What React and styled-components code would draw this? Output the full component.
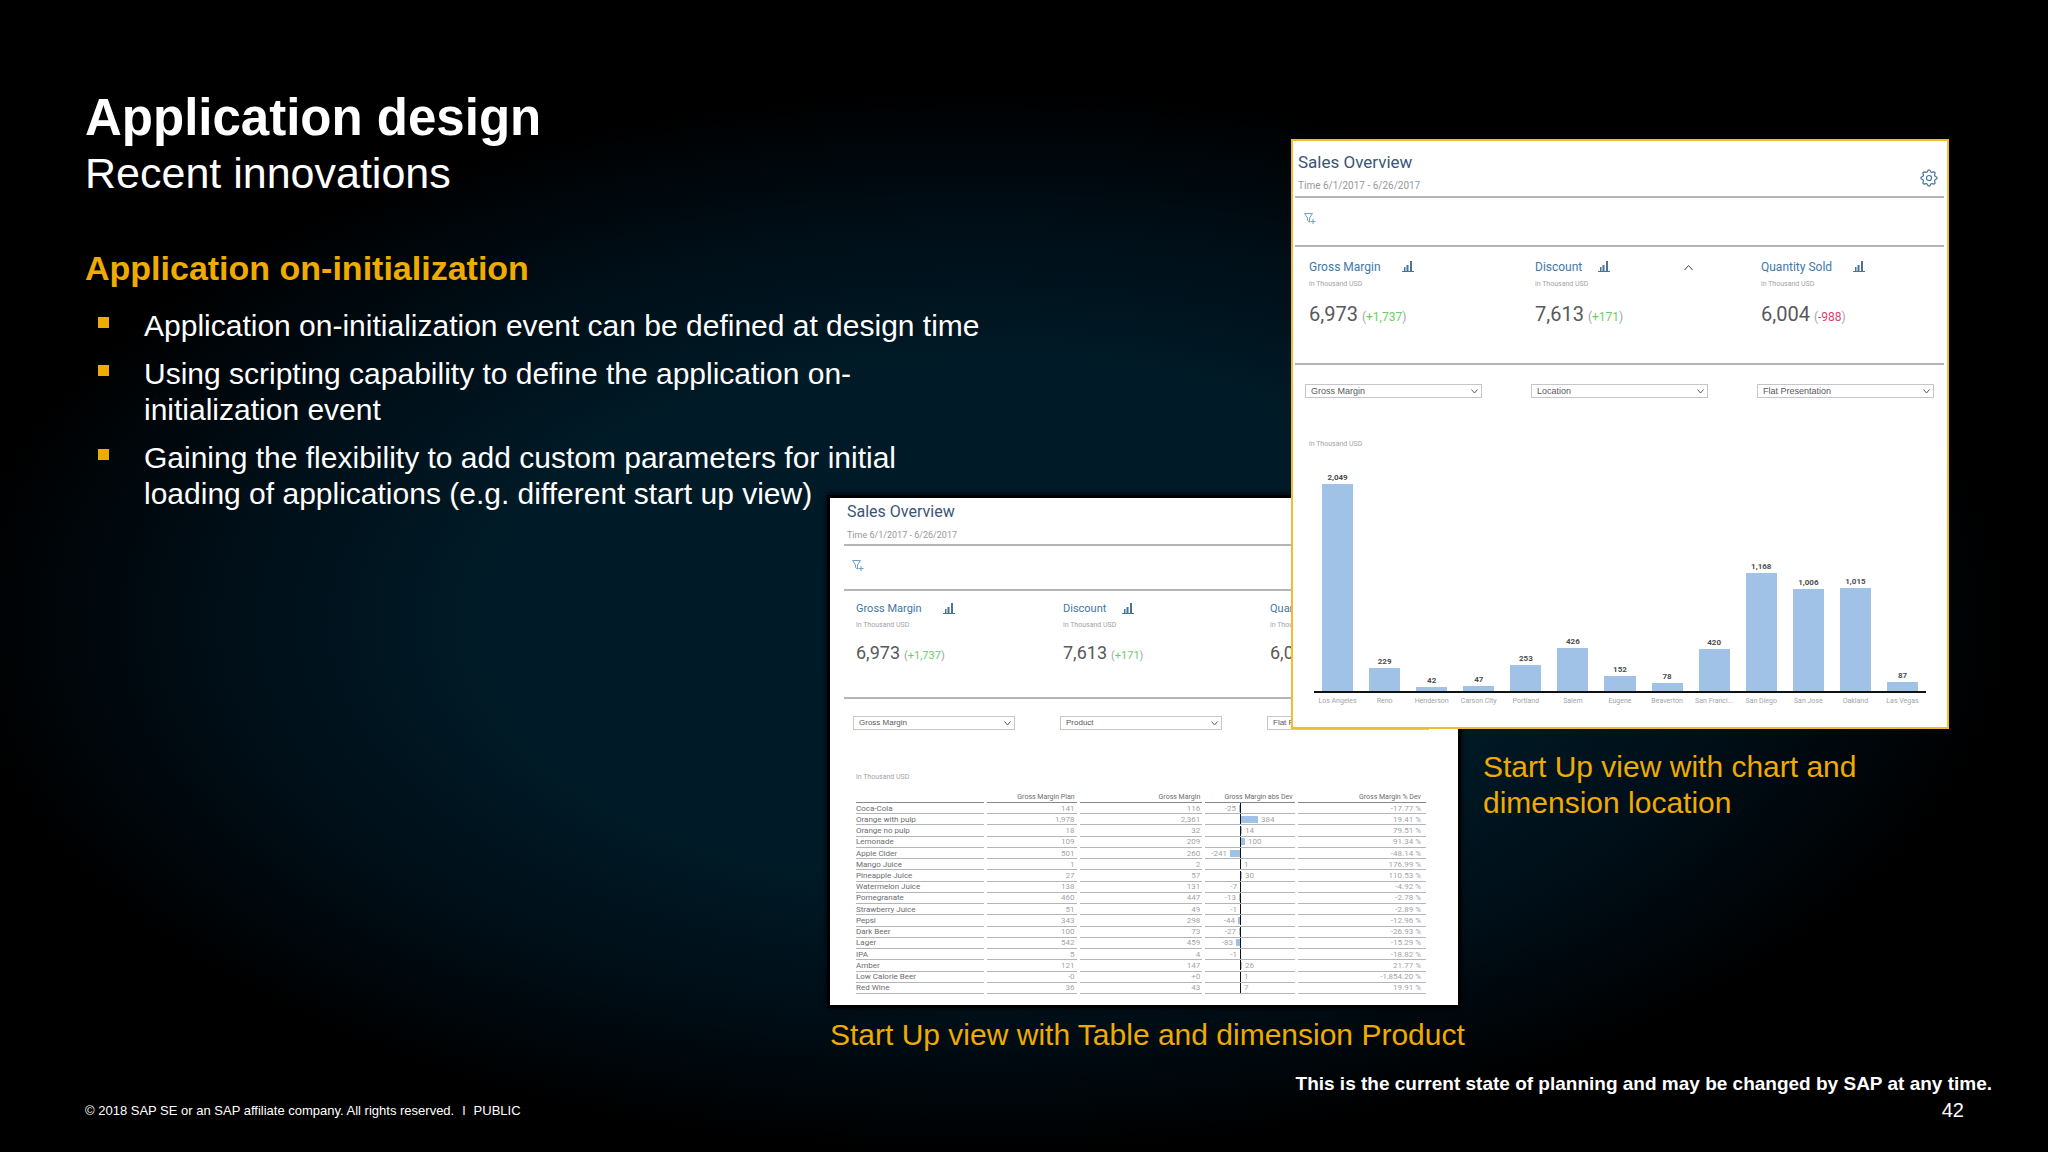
import React from 'react'
import styled, { createGlobalStyle } from 'styled-components'

const GlobalStyle = createGlobalStyle`
  * {
    box-sizing: border-box;
  }

  body {
    background: #000;
    margin: 0;
  }
`

const Slide = styled.main`
  background:
    radial-gradient(ellipse 50% 46% at 48% 54%, #001b2a 0%, #001a26 50%, #000e17 75%, rgba(0, 0, 0, 0) 100%),
    #000;
  color: #fff;
  display: grid;
  font-family: 'Liberation Sans', Arial, sans-serif;
  grid-template-columns: 742fr 464fr 170fr 488fr 99fr;
  grid-template-rows: 411px 234px auto 1fr;
  min-height: 100vh;
  padding: 84px 0 0 85px;
`

const Copy = styled.section`
  grid-column: 1 / 3;
  grid-row: 1 / 3;
  max-width: 896px;
`

const Title = styled.h1`
  font-size: 51px;
  line-height: 68px;
  margin: 0;
`

const Subtitle = styled.p`
  font-size: 43px;
  line-height: 42px;
  margin: 0;
`

const Topic = styled.h2`
  color: #f0ab00;
  font-size: 34px;
  line-height: 40px;
  margin: 54px 0 20px;
`

const Bullets = styled.ul`
  display: flex;
  flex-direction: column;
  font-size: 30px;
  gap: 12px;
  line-height: 36px;
  list-style: none;
  margin: 0;
  padding: 0;
`

const Bullet = styled.li`
  display: flex;
  gap: 35px;
  padding-left: 13px;

  &::before {
    background: #f0ab00;
    content: '';
    flex: none;
    height: 11px;
    margin-top: 9px;
    width: 11px;
  }
`

const Caption = styled.p`
  color: #f0ab00;
  font-size: 30px;
  line-height: 36px;
  margin: 0;
`

const ChartCaption = styled(Caption)`
  grid-column: 4;
  grid-row: 3;
  padding: 20px 60px 0 22px;
`

const TableCaption = styled(Caption)`
  grid-column: 2 / 5;
  grid-row: 4;
  padding: 9px 0 0 3px;
`

const Footer = styled.footer`
  align-items: flex-end;
  display: flex;
  grid-column: 1 / 6;
  grid-row: 4;
  justify-content: space-between;
  padding: 0 56px 29px 0;
`

const Legal = styled.small`
  display: flex;
  font-size: 13px;
  gap: 8px;
  line-height: 20px;
  padding-bottom: 2px;
`

const Disclaimer = styled.div`
  font-size: 19px;
  font-weight: 700;
  line-height: 26px;
`

const PageNumber = styled.div`
  font-size: 20px;
  font-weight: 400;
  padding-right: 28px;
  text-align: right;
`

const Panel = styled.article`
  background: #fff;
  color: #58595b;
  font-family: Roboto, sans-serif;
`

const ChartPanel = styled(Panel)`
  border: 2px solid #f2bc30;
  grid-column: 3 / 5;
  grid-row: 1 / 3;
  margin-top: 55px;
  padding: 0 3px 0 2px;
  z-index: 1;
`

const TablePanel = styled(Panel)`
  align-self: start;
  border: 3px solid #000;
  box-shadow: 0 0 5px #000;
  grid-column: 2 / 4;
  grid-row: 2 / 4;
  padding: 0 19px 11px 14px;
`

const PanelHeader = styled.header`
  align-items: flex-end;
  border-bottom: 2px solid #b4b5b8;
  display: flex;
  height: ${({ $small }) => ($small ? 48 : 57)}px;
  justify-content: space-between;
  padding: 0 6px 0 3px;
`

const PanelTitle = styled.h3`
  color: #3a5575;
  font-size: ${({ $small }) => ($small ? 16 : 17)}px;
  font-weight: 400;
  line-height: 28px;
  margin: 0;
`

const Period = styled.p`
  color: #97999b;
  font-size: ${({ $small }) => ($small ? 9 : 10)}px;
  line-height: ${({ $small }) => ($small ? 18 : 20)}px;
  margin: 0;
`

const IconButton = styled.button`
  background: none;
  border: 0;
  color: ${({ $color }) => $color || '#4a7396'};
  display: flex;
  padding: 0;
`

const Settings = styled(IconButton)`
  margin-bottom: 9px;
`

const FilterBar = styled.div`
  border-bottom: 2px solid #b4b5b8;
  height: ${({ $small }) => ($small ? 45 : 49)}px;
  padding: ${({ $small }) => ($small ? '14px 8px' : '15px 9px')};
`

const Columns = styled.div`
  display: grid;
  grid-template-columns: ${({ $small }) => ($small ? '207fr 207fr 181fr' : '226fr 226fr 197fr')};
`

const Kpis = styled(Columns)`
  border-bottom: 2px solid #b4b5b8;
  height: ${({ $small }) => ($small ? 108 : 118)}px;
  padding-top: ${({ $small }) => ($small ? 8 : 9)}px;
`

const Kpi = styled.div`
  padding-left: ${({ $small }) => ($small ? 12 : 14)}px;
`

const KpiHead = styled.div`
  align-items: center;
  color: #3f78a8;
  display: flex;
  font-size: ${({ $small }) => ($small ? 11 : 12)}px;
  gap: ${({ $wide }) => ($wide ? 21 : 16)}px;
  line-height: ${({ $small }) => ($small ? 20 : 22)}px;
`

const ChartLink = styled(IconButton)`
  padding-bottom: 3px;
`

const Toggle = styled(IconButton)`
  margin: 0 54px 0 auto;
`

const Unit = styled.p`
  color: #a2a4a6;
  font-size: 7px;
  line-height: 12px;
  margin: 0;
`

const Value = styled.p`
  font-size: ${({ $small }) => ($small ? 18 : 20)}px;
  line-height: 24px;
  margin: ${({ $small }) => ($small ? 10 : 12)}px 0 0;
`

const Delta = styled.span`
  color: #a2a4a6;
  font-size: ${({ $small }) => ($small ? 11 : 12)}px;
  margin-left: 4px;

  b {
    color: ${({ $down }) => ($down ? '#e3406f' : '#68cf63')};
    font-weight: 400;
  }
`

const Filters = styled(Columns)`
  padding-top: ${({ $small }) => ($small ? 17 : 19)}px;
`

const SelectBox = styled.label`
  display: block;
  margin: 0 ${({ $small }) => ($small ? 36 : 39)}px 0 ${({ $small }) => ($small ? 9 : 10)}px;
  position: relative;

  svg {
    pointer-events: none;
    position: absolute;
    right: 3px;
    top: 4px;
  }
`

const LastSelectBox = styled(SelectBox)`
  margin-right: 10px;
`

const Select = styled.select`
  appearance: none;
  background: #fff;
  border: 1px solid #c5c6cb;
  border-radius: 0;
  color: #58595b;
  display: block;
  font-family: 'Liberation Sans', Arial, sans-serif;
  font-size: ${({ $small }) => ($small ? 8 : 9)}px;
  height: 14px;
  line-height: 12px;
  padding: 0 5px;
  width: 100%;
`

const Chart = styled.div`
  padding: 40px 18px 23px 14px;
`

const Bars = styled.div`
  align-items: flex-end;
  border-bottom: 2px solid #111;
  display: flex;
  height: 243px;
  margin-left: 5px;
`

const BarSlot = styled.div`
  align-items: center;
  color: #4c4d4f;
  display: flex;
  flex: 1;
  flex-direction: column;
  font-size: 8px;
  font-weight: 700;
  line-height: 12px;
`

const Bar = styled.div`
  background: #9fc2e6;
  width: 66%;
`

const Cities = styled.div`
  color: #a2a4a6;
  display: flex;
  font-size: 7px;
  line-height: 12px;
  margin: 2px 0 0 5px;

  span {
    flex: 1;
    text-align: center;
    white-space: nowrap;
  }
`

const TableArea = styled.div`
  padding: 41px 10px 0 12px;
`

const Table = styled.table`
  border-collapse: separate;
  border-spacing: 3px 0;
  color: #a2a4a6;
  font-size: 8px;
  height: 201px;
  line-height: 9px;
  margin: 10px 0 0 -3px;
  table-layout: fixed;
  width: calc(100% + 3px);

  th {
    border-bottom: 1px solid #b4b5b8;
    color: #6b6d70;
    font-weight: 400;
    padding: 0 2px;
    text-align: right;
    white-space: nowrap;
  }

  thead th {
    border-color: #85878a;
    font-size: 7px;
  }

  tbody th {
    padding: 0;
    text-align: left;
  }

  td {
    border-bottom: 1px solid #b4b5b8;
    padding: 0 2px;
    text-align: right;
  }

  th:last-child,
  td:last-child {
    padding-right: 5px;
  }
`

const DevCell = styled.td`
  && {
    padding: 0;
  }
`

const Deviation = styled.div`
  display: grid;
  grid-template-columns: 2fr 3fr;
  height: 10px;
`

const Side = styled.div`
  align-items: center;
  display: flex;
  gap: 3px;
  justify-content: ${({ $left }) => ($left ? 'flex-end' : 'flex-start')};
  ${({ $left }) => $left && 'border-right: 1px solid #111;'}
`

const DevBar = styled.div`
  background: #9fc2e6;
  height: 7px;
`

const FilterIcon = () => (
  <svg width="12" height="12" viewBox="0 0 12 12" fill="none" stroke="currentColor">
    <path d="M.5.5h8L5.500 5v4L3.500 7.500V5zM9 6v5M6.500 8.500h5" />
  </svg>
)

const ChartIcon = () => (
  <svg width="12" height="12" viewBox="0 0 12 12" fill="currentColor">
    <path d="M0 11h12v1H0zM2 7h1.500v4H2zM4.500 5h2v6h-2zM8 1h2v10H8z" />
  </svg>
)

// eight rounded teeth around the hub
const gearPoints = Array.from({ length: 32 }, (_, i) => {
  const angle = ((i - 0.5) * Math.PI) / 16
  const radius = i % 4 < 2 ? 8 : 6.3
  return `${(9 + radius * Math.cos(angle)).toFixed(2)},${(9 + radius * Math.sin(angle)).toFixed(2)}`
}).join(' ')

const GearIcon = () => (
  <svg width="18" height="18" viewBox="0 0 18 18" fill="none" stroke="currentColor" strokeWidth="1.2" strokeLinejoin="round">
    <polygon points={gearPoints} />
    <circle cx="9" cy="9" r="2.500" />
  </svg>
)

const Chevron = ({ up }) => (
  <svg width="9" height="7" viewBox="0 0 9 7" fill="none" stroke="currentColor">
    <path d={up ? 'M.5 6l4-4.500 4 4.500' : 'M1.500 1.500l3 3.500 3-3.500'} />
  </svg>
)

const kpis = [
  { name: 'Gross Margin', value: '6,973', delta: '+1,737' },
  { name: 'Discount', value: '7,613', delta: '+171' },
  { name: 'Quantity Sold', value: '6,004', delta: '-988', down: true },
]

const cities = [
  ['Los Angeles', 2049],
  ['Reno', 229],
  ['Henderson', 42],
  ['Carson City', 47],
  ['Portland', 253],
  ['Salem', 426],
  ['Eugene', 152],
  ['Beaverton', 78],
  ['San Franci...', 420],
  ['San Diego', 1168],
  ['San Jose', 1006],
  ['Oakland', 1015],
  ['Las Vegas', 87],
]

const products = [
  ['Coca-Cola', '141', '116', -25, '-17.77 %'],
  ['Orange with pulp', '1,978', '2,361', 384, '19.41 %'],
  ['Orange no pulp', '18', '32', 14, '79.51 %'],
  ['Lemonade', '109', '209', 100, '91.34 %'],
  ['Apple Cider', '501', '260', -241, '-48.14 %'],
  ['Mango Juice', '1', '2', 1, '176.99 %'],
  ['Pineapple Juice', '27', '57', 30, '110.53 %'],
  ['Watermelon Juice', '138', '131', -7, '-4.92 %'],
  ['Pomegranate', '460', '447', -13, '-2.78 %'],
  ['Strawberry Juice', '51', '49', -1, '-2.89 %'],
  ['Pepsi', '343', '298', -44, '-12.96 %'],
  ['Dark Beer', '100', '73', -27, '-26.93 %'],
  ['Lager', '542', '459', -83, '-15.29 %'],
  ['IPA', '5', '4', -1, '-18.82 %'],
  ['Amber', '121', '147', 26, '21.77 %'],
  ['Low Calorie Beer', '-0', '+0', 1, '-1,854.20 %'],
  ['Red Wine', '36', '43', 7, '19.91 %'],
]

const Dropdown = ({ label, value, small, last }) => {
  const Box = last ? LastSelectBox : SelectBox
  return (
    <Box $small={small}>
      <Select $small={small} aria-label={label} defaultValue={value}>
        <option>{value}</option>
      </Select>
      <Chevron />
    </Box>
  )
}

const Overview = ({ small, dimension }) => (
  <>
    <PanelHeader $small={small}>
      <div>
        <PanelTitle $small={small}>Sales Overview</PanelTitle>
        <Period $small={small}>Time 6/1/2017 - 6/26/2017</Period>
      </div>
      {!small && (
        <Settings aria-label="Settings"><GearIcon /></Settings>
      )}
    </PanelHeader>
    <FilterBar $small={small}>
      <IconButton aria-label="Add filter" $color="#6fa0c8"><FilterIcon /></IconButton>
    </FilterBar>
    <Kpis $small={small}>
      {kpis.map((kpi, i) => (
        <Kpi key={kpi.name} $small={small}>
          <KpiHead $small={small} $wide={i !== 1}>
            {kpi.name}
            <ChartLink aria-label={`${kpi.name} chart`}><ChartIcon /></ChartLink>
            {i === 1 && !small && (
              <Toggle aria-label="Collapse" $color="#33475b"><Chevron up /></Toggle>
            )}
          </KpiHead>
          <Unit>in Thousand USD</Unit>
          <Value $small={small}>
            {kpi.value}
            <Delta $small={small} $down={kpi.down}>(<b>{kpi.delta}</b>)</Delta>
          </Value>
        </Kpi>
      ))}
    </Kpis>
    <Filters $small={small}>
      <Dropdown label="Measure" value="Gross Margin" small={small} />
      <Dropdown label="Dimension" value={dimension} small={small} />
      <Dropdown label="Presentation" value="Flat Presentation" small={small} last />
    </Filters>
  </>
)

const LocationView = () => (
  <ChartPanel>
    <Overview dimension="Location" />
    <Chart>
      <Unit>in Thousand USD</Unit>
      <Bars>
        {cities.map(([city, amount]) => (
          <BarSlot key={city}>
            {amount.toLocaleString('en-US')}
            <Bar style={{ height: Math.round(amount * 0.101) }} />
          </BarSlot>
        ))}
      </Bars>
      <Cities>
        {cities.map(([city]) => <span key={city}>{city}</span>)}
      </Cities>
    </Chart>
  </ChartPanel>
)

const ProductView = () => (
  <TablePanel>
    <Overview small dimension="Product" />
    <TableArea>
      <Unit>in Thousand USD</Unit>
      <Table>
        <colgroup>
          <col width="23%" />
          <col width="16%" />
          <col width="22%" />
          <col width="16%" />
          <col width="23%" />
        </colgroup>
        <thead>
          <tr>
            <th aria-label="Product" />
            <th>Gross Margin Plan</th>
            <th>Gross Margin</th>
            <th>Gross Margin abs Dev</th>
            <th>Gross Margin % Dev</th>
          </tr>
        </thead>
        <tbody>
          {products.map(([name, plan, actual, dev, percent]) => {
            const width = Math.round(Math.abs(dev) * 0.0434)
            return (
              <tr key={name}>
                <th scope="row">{name}</th>
                <td>{plan}</td>
                <td>{actual}</td>
                <DevCell>
                  <Deviation>
                    <Side $left>
                      {dev < 0 && <>{dev}<DevBar style={{ width }} /></>}
                    </Side>
                    <Side>
                      {dev > 0 && <><DevBar style={{ width }} />{dev}</>}
                    </Side>
                  </Deviation>
                </DevCell>
                <td>{percent}</td>
              </tr>
            )
          })}
        </tbody>
      </Table>
    </TableArea>
  </TablePanel>
)

const App = () => (
  <>
    <GlobalStyle />
    <Slide>
      <Copy>
        <Title>Application design</Title>
        <Subtitle>Recent innovations</Subtitle>
        <Topic>Application on-initialization</Topic>
        <Bullets>
          <Bullet>Application on-initialization event can be defined at design time</Bullet>
          <Bullet>Using scripting capability to define the application on-initialization event</Bullet>
          <Bullet>Gaining the flexibility to add custom parameters for initial loading of applications (e.g. different start up view)</Bullet>
        </Bullets>
      </Copy>
      <ProductView />
      <LocationView />
      <ChartCaption>Start Up view with chart and dimension location</ChartCaption>
      <TableCaption>Start Up view with Table and dimension Product</TableCaption>
      <Footer>
        <Legal>
          <span>© 2018 SAP SE or an SAP affiliate company. All rights reserved.</span>
          <span>ǀ</span>
          <span>PUBLIC</span>
        </Legal>
        <Disclaimer>
          This is the current state of planning and may be changed by SAP at any time.
          <PageNumber>42</PageNumber>
        </Disclaimer>
      </Footer>
    </Slide>
  </>
)

export default App
